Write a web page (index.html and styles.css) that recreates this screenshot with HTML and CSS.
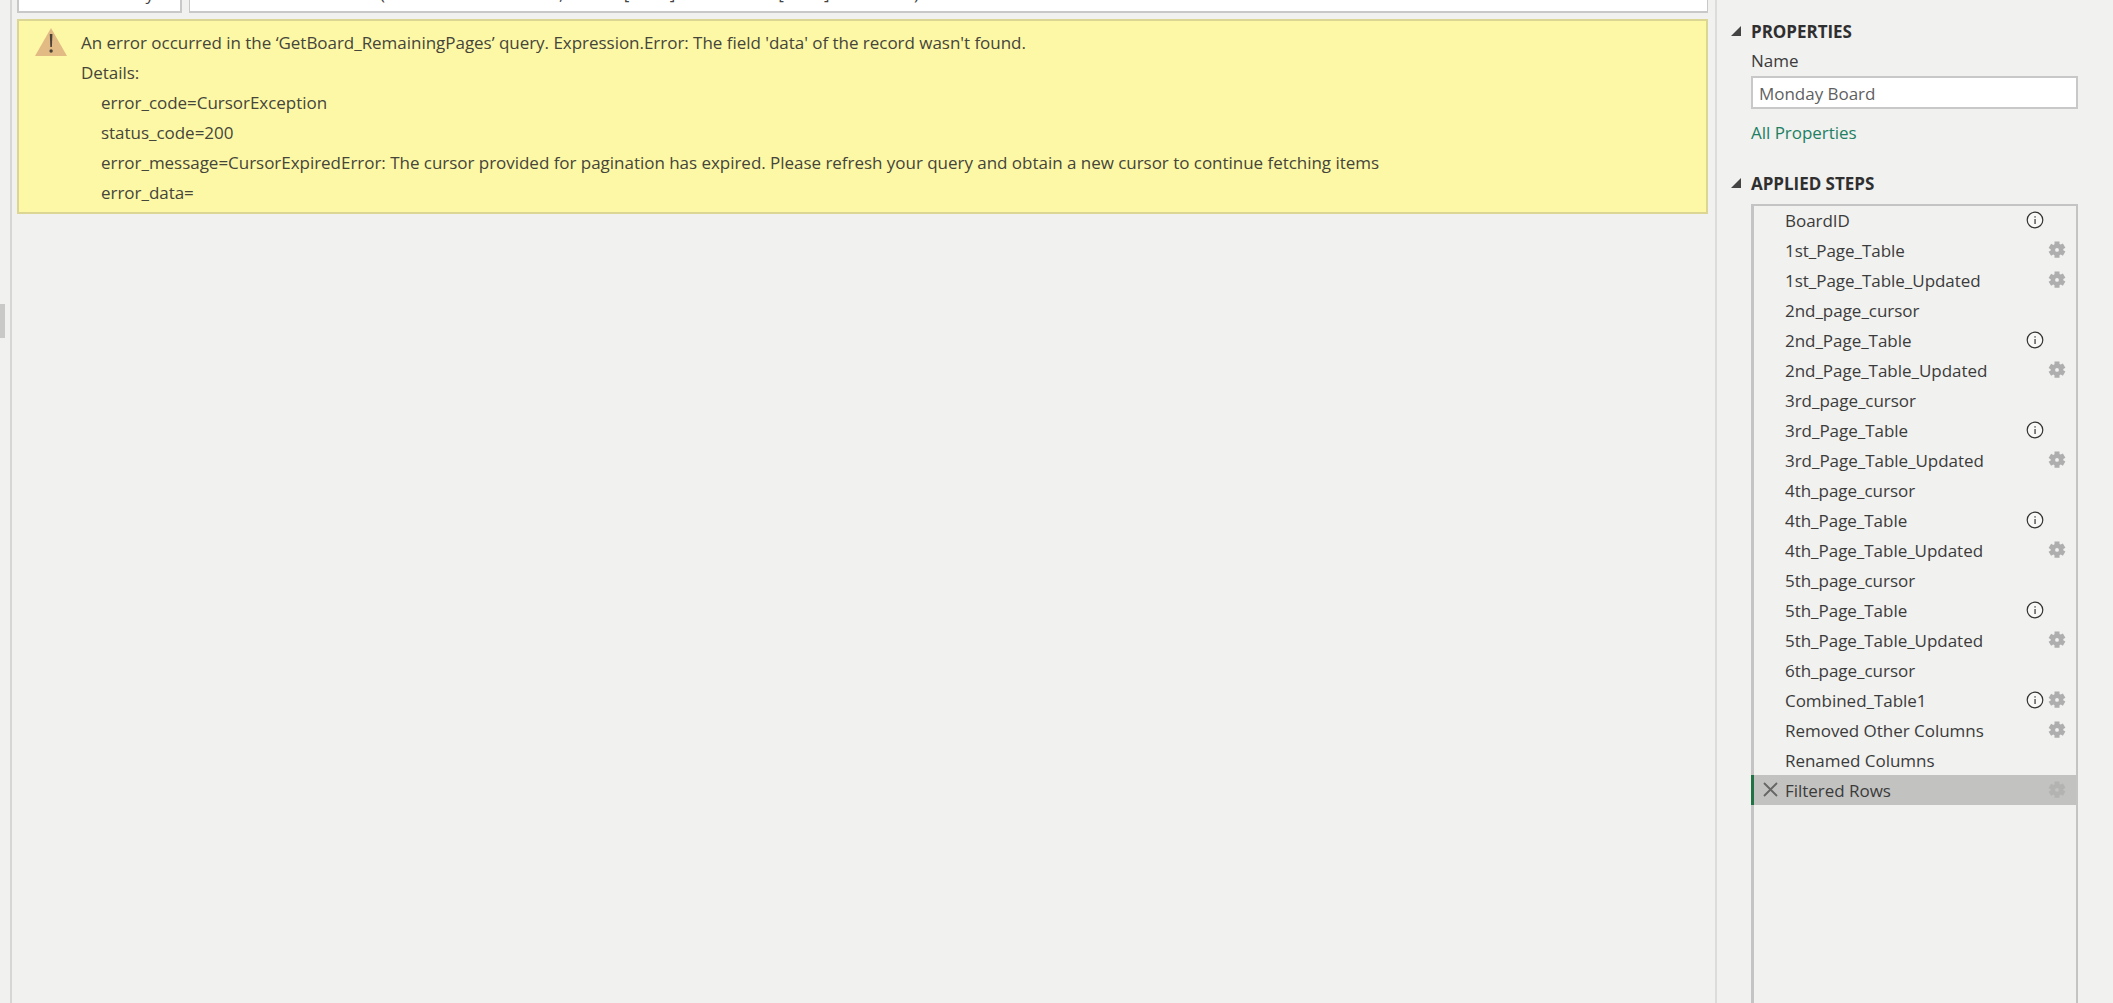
FILE: index.html
```html
<!DOCTYPE html>
<html lang="en">
<head>
<meta charset="utf-8">
<title>Power Query Editor</title>
<link rel="stylesheet" href="styles.css">
</head>
<body>
<div class="app">
  <div class="rail"><div class="grip"></div></div>
  <main class="main">
    <div class="topbar">
      <div class="namebox"><div class="clipped-line">Monday</div></div>
      <div class="formula"><div class="clipped-line">= Table.SelectRows(#"Renamed Columns", each if [State] &lt;&gt; "Do" and [State] &lt;&gt; "Stuck")</div></div>
    </div>
    <section class="alert">
      <svg class="alert-icon" width="34" height="30" viewBox="0 0 34 30"><path d="M17 1 33 29H1Z" fill="#e2bb84"/><path d="M15.800 7h2.600l-.5 13h-1.600Z" fill="#4a4238"/><circle cx="17.100" cy="24" r="1.700" fill="#4a4238"/></svg>
      <div class="alert-text">
        <p>An error occurred in the ‘GetBoard_RemainingPages’ query. Expression.Error: The field 'data' of the record wasn't found.</p>
        <p>Details:</p>
        <p class="indent">error_code=CursorException</p>
        <p class="indent">status_code=200</p>
        <p class="indent">error_message=CursorExpiredError: The cursor provided for pagination has expired. Please refresh your query and obtain a new cursor to continue fetching items</p>
        <p class="indent">error_data=</p>
      </div>
    </section>
  </main>
  <aside class="panel">
    <h2 class="section-title title-props"><span class="caret"></span>PROPERTIES</h2>
    <label class="field-label">Name</label>
    <div class="name-input">Monday Board</div>
    <a class="all-props">All Properties</a>
    <h2 class="section-title title-steps"><span class="caret"></span>APPLIED STEPS</h2>
    <div class="steps">
      <div class="step"><span class="step-name">BoardID</span><svg class="ic"><use href="#info"/></svg><span class="ic"></span></div>
      <div class="step"><span class="step-name">1st_Page_Table</span><span class="ic"></span><svg class="ic"><use href="#gear"/></svg></div>
      <div class="step"><span class="step-name">1st_Page_Table_Updated</span><span class="ic"></span><svg class="ic"><use href="#gear"/></svg></div>
      <div class="step"><span class="step-name">2nd_page_cursor</span></div>
      <div class="step"><span class="step-name">2nd_Page_Table</span><svg class="ic"><use href="#info"/></svg><span class="ic"></span></div>
      <div class="step"><span class="step-name">2nd_Page_Table_Updated</span><span class="ic"></span><svg class="ic"><use href="#gear"/></svg></div>
      <div class="step"><span class="step-name">3rd_page_cursor</span></div>
      <div class="step"><span class="step-name">3rd_Page_Table</span><svg class="ic"><use href="#info"/></svg><span class="ic"></span></div>
      <div class="step"><span class="step-name">3rd_Page_Table_Updated</span><span class="ic"></span><svg class="ic"><use href="#gear"/></svg></div>
      <div class="step"><span class="step-name">4th_page_cursor</span></div>
      <div class="step"><span class="step-name">4th_Page_Table</span><svg class="ic"><use href="#info"/></svg><span class="ic"></span></div>
      <div class="step"><span class="step-name">4th_Page_Table_Updated</span><span class="ic"></span><svg class="ic"><use href="#gear"/></svg></div>
      <div class="step"><span class="step-name">5th_page_cursor</span></div>
      <div class="step"><span class="step-name">5th_Page_Table</span><svg class="ic"><use href="#info"/></svg><span class="ic"></span></div>
      <div class="step"><span class="step-name">5th_Page_Table_Updated</span><span class="ic"></span><svg class="ic"><use href="#gear"/></svg></div>
      <div class="step"><span class="step-name">6th_page_cursor</span></div>
      <div class="step"><span class="step-name">Combined_Table1</span><svg class="ic"><use href="#info"/></svg><svg class="ic"><use href="#gear"/></svg></div>
      <div class="step"><span class="step-name">Removed Other Columns</span><span class="ic"></span><svg class="ic"><use href="#gear"/></svg></div>
      <div class="step"><span class="step-name">Renamed Columns</span></div>
      <div class="step selected">
        <svg class="del" width="15" height="15" viewBox="0 0 15 15"><path d="M1 1 14 14M14 1 1 14" stroke="#666" stroke-width="1.800" fill="none"/></svg>
        <span class="step-name">Filtered Rows</span><span class="ic"></span><svg class="ic dim"><use href="#gear"/></svg>
      </div>
    </div>
  </aside>
</div>
<svg class="defs" width="0" height="0">
  <symbol id="info" viewBox="0 0 18 18"><circle cx="9" cy="9" r="7.800" fill="#fff" fill-opacity=".5" stroke="#333" stroke-width="1.200"/><rect x="8.400" y="8" width="1.300" height="5" fill="#444"/><rect x="8.400" y="5.200" width="1.300" height="1.400" fill="#444"/></symbol>
  <symbol id="gear" viewBox="0 0 18 18"><path fill-rule="evenodd" d="M6.500.4h5v2.500l1.200.7 2.200-1.200 2.500 4.300-2.100 1.200v1.400l2.100 1.200-2.500 4.300-2.200-1.200-1.200.7v2.500h-5v-2.500l-1.200-.7-2.200 1.200L.6 10.800l2.100-1.200V8.200L.6 7 3.100 2.700l2.200 1.200 1.200-.7ZM9 7a1.900 1.900 0 1 0 0 3.800A1.900 1.900 0 0 0 9 7Z" fill="#aeaeae"/></symbol>
</svg>
</body>
</html>
```

FILE: styles.css
```css
* { box-sizing: border-box; }
html, body { margin: 0; height: 100%; overflow: hidden; }
body { background: #f1f1ef; color: #3b3b3b; font-family: "Open Sans", "Noto Sans", sans-serif; font-size: 17px; letter-spacing: -0.03px; }
.app { display: flex; height: 1003px; }
.rail { width: 12px; flex: none; border-right: 2px solid #d6d6d4; padding-top: 304px; }
.grip { width: 5px; height: 34px; background: #c9c9c7; }
.main { width: 1705px; flex: none; padding-left: 5px; padding-right: 7px; border-right: 2px solid #dcdcda; }
.topbar { display: flex; gap: 7px; height: 13px; }
.namebox { width: 165px; background: #fff; border: solid #c8c8c8; border-width: 0 2px 2px 2px; overflow: hidden; padding-right: 26px; text-align: right; }
.formula { flex: 1; background: #fff; border: solid #c8c8c8; border-width: 0 1px 2px 1px; overflow: hidden; padding-left: 40px; }
.clipped-line { margin-top: -21px; line-height: 30px; white-space: nowrap; color: #444; }
.alert { display: flex; margin-top: 6px; height: 195px; background: #fdf8a6; border: 2px solid #dcd694; padding: 7px 0 0 15px; }
.alert-icon { flex: none; margin: -1px 13px 0 0; }
.alert-text { color: #45453a; }
.alert-text p { margin: 0; line-height: 30px; white-space: nowrap; }
.alert-text .indent { padding-left: 20px; }
.panel { flex: 1; padding-left: 34px; }
.section-title { margin: 0; display: flex; align-items: center; font-size: 17px; font-weight: 700; color: #2f2f2f; height: 30px; position: relative; }
.caret { position: absolute; left: -20px; top: 10px; width: 0; height: 0; border-style: solid; border-width: 0 0 10px 10px; border-color: transparent transparent #444 transparent; }
.title-props { margin-top: 16px; }
.field-label { display: block; line-height: 30px; height: 30px; }
.name-input { width: 327px; height: 33px; background: #fff; border: 2px solid #c8c8c8; padding-left: 6px; line-height: 31px; color: #5f5f5f; }
.all-props { display: block; margin-top: 9px; line-height: 30px; color: #217f63; }
.title-steps { margin-top: 20px; }
.steps { width: 327px; height: 820px; margin-top: 6px; border: solid #c4c4c4; border-width: 1px 2px 0 3px; box-shadow: inset 0 1px 0 #c4c4c4; }
.step { display: flex; align-items: center; height: 30px; padding-left: 31px; padding-right: 10px; position: relative; white-space: nowrap; }
.step-name { flex: 1; }
.ic { width: 18px; height: 18px; flex: none; margin-left: 4px; }
.selected { background: #c2c2c0; margin-left: -3px; padding-left: 31px; border-left: 3px solid #217346; }
.del { position: absolute; left: 9px; top: 7px; }
.dim { opacity: .75; }
.defs { position: absolute; }
```
